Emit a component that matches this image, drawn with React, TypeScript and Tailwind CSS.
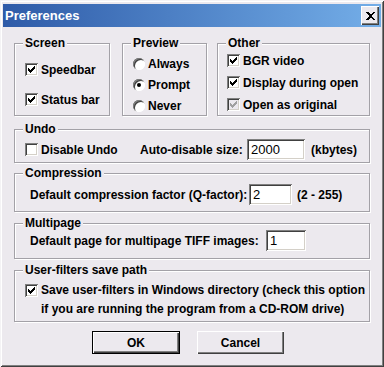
import type { ReactNode } from "react";

const font = { fontFamily: '"Liberation Sans", Arial, sans-serif' };

function Check({ checked, disabled }: { checked?: boolean; disabled?: boolean }) {
    return (
        <span
            className={`w-[13px] h-[13px] shrink-0 flex items-center justify-center shadow-[inset_1px_1px_0_#808080,inset_-1px_-1px_0_#ffffff,inset_2px_2px_0_#404040,inset_-2px_-2px_0_#d4d0c8] ${
                disabled ? "bg-[#ece9ee]" : "bg-white"
            }`}
        >
            {checked && (
                <svg width="7" height="7" viewBox="0 0 7 7" shapeRendering="crispEdges">
                    <path
                        d="M0 2h1v3h-1zM1 3h1v3h-1zM2 4h1v3h-1zM3 3h1v3h-1zM4 2h1v3h-1zM5 1h1v3h-1zM6 0h1v3h-1z"
                        fill={disabled ? "#a0a0a0" : "#000"}
                    />
                </svg>
            )}
        </span>
    );
}

function Radio({ checked }: { checked?: boolean }) {
    return (
        <span className="w-[12px] h-[12px] shrink-0 rounded-full bg-white flex items-center justify-center shadow-[inset_1px_1px_0_#808080,inset_-1px_-1px_0_#ffffff,inset_2px_2px_0_#404040]">
            {checked && <span className="w-[4px] h-[4px] rounded-full bg-black" />}
        </span>
    );
}

function Group({ title, className, children }: { title: string; className?: string; children?: ReactNode }) {
    return (
        <div className={`relative border border-[#a3a1a7] shadow-[1px_1px_0_#ffffff,inset_1px_1px_0_#ffffff] ${className ?? ""}`}>
            <span className="absolute -top-[8px] left-[8px] px-[2px] bg-[#ece9ee] leading-[14px]">{title}</span>
            {children}
        </div>
    );
}

function Field({ value, className }: { value: string; className?: string }) {
    return (
        <div
            className={`h-[21px] bg-white pl-[4px] flex items-center font-normal text-[13px] shadow-[inset_1px_1px_0_#808080,inset_-1px_-1px_0_#ffffff,inset_2px_2px_0_#404040,inset_-2px_-2px_0_#d4d0c8] ${className ?? ""}`}
        >
            {value}
        </div>
    );
}

function Option({ children, box }: { children: ReactNode; box: ReactNode }) {
    return (
        <div className="h-[15px] flex items-center gap-[3px]">
            {box}
            <span>{children}</span>
        </div>
    );
}

export default function App() {
    return (
        <div
            style={font}
            className="w-[384px] h-[367px] bg-[#ece9ee] text-black text-[12px] font-bold flex flex-col shadow-[inset_1px_1px_0_#f4f3f5,inset_-1px_-1px_0_#404040,inset_2px_2px_0_#ffffff,inset_-2px_-2px_0_#808080]"
        >
            {/* Title bar */}
            <div className="mt-[4px] mx-[3px] h-[23px] bg-gradient-to-r from-[#2f5ba8] to-[#74aee8] flex items-center pl-[2px] pr-[2px]">
                <span className="text-white text-[13px] leading-none">Preferences</span>
                <button className="ml-auto w-[18px] h-[19px] bg-[#ece9ee] flex items-center justify-center shadow-[inset_1px_1px_0_#ffffff,inset_-1px_-1px_0_#404040,inset_-2px_-2px_0_#808080]">
                    <svg width="9" height="8" viewBox="0 0 9 8" shapeRendering="crispEdges">
                        <path d="M0 0h2l2.5 2.5L7 0h2L5.5 4 9 8H7L4.5 5.5 2 8H0l3.5-4z" fill="#000" />
                    </svg>
                </button>
            </div>

            <div className="flex flex-col px-[14px]">
                {/* Top row */}
                <div className="mt-[16px] h-[73px] flex gap-[12px]">
                    <Group title="Screen" className="w-[96px] pl-[10px] pt-[18px] flex flex-col gap-[15px]">
                        <Option box={<Check checked />}>Speedbar</Option>
                        <Option box={<Check checked />}>Status bar</Option>
                    </Group>
                    <Group title="Preview" className="w-[85px] pl-[10px] pt-[12px] flex flex-col gap-[6px]">
                        <Option box={<Radio />}>Always</Option>
                        <Option box={<Radio checked />}>Prompt</Option>
                        <Option box={<Radio />}>Never</Option>
                    </Group>
                    <Group title="Other" className="ml-[-2px] flex-1 pl-[9px] pt-[9px] flex flex-col gap-[7px]">
                        <Option box={<Check checked />}>BGR video</Option>
                        <Option box={<Check checked />}>Display during open</Option>
                        <Option box={<Check checked disabled />}>Open as original</Option>
                    </Group>
                </div>

                {/* Undo */}
                <Group title="Undo" className="mt-[13px] h-[34px] pl-[10px] pt-[9px] flex items-start">
                    <div className="w-[115px] h-[21px] flex items-center gap-[3px]">
                        <Check />
                        <span>Disable Undo</span>
                    </div>
                    <div className="w-[107px] h-[21px] flex items-center">Auto-disable size:</div>
                    <Field value="2000" className="w-[58px]" />
                    <div className="ml-[6px] h-[21px] flex items-center">(kbytes)</div>
                </Group>

                {/* Compression */}
                <Group title="Compression" className="mt-[10px] h-[39px] pl-[15px] pt-[10px] flex items-start">
                    <div className="w-[219px] h-[21px] flex items-center">Default compression factor (Q-factor):</div>
                    <Field value="2" className="w-[43px]" />
                    <div className="ml-[5px] h-[21px] flex items-center">(2 - 255)</div>
                </Group>

                {/* Multipage */}
                <Group title="Multipage" className="mt-[11px] h-[36px] pl-[15px] pt-[6px] flex items-start">
                    <div className="w-[236px] h-[21px] flex items-center">Default page for multipage TIFF images:</div>
                    <Field value="1" className="w-[40px]" />
                </Group>

                {/* User-filters */}
                <Group title="User-filters save path" className="mt-[11px] h-[52px] pl-[10px] pt-[10px] flex items-start gap-[3px]">
                    <div className="h-[19px] flex items-center">
                        <Check checked />
                    </div>
                    <div className="leading-[19px]">
                        Save user-filters in Windows directory (check this option
                        <br />
                        if you are running the program from a CD-ROM drive)
                    </div>
                </Group>

                {/* Buttons */}
                <div className="mt-[9px] flex gap-[17px] pl-[78px]">
                    <button className="w-[88px] h-[23px] bg-[#ece9ee] border border-black shadow-[inset_1px_1px_0_#ffffff,inset_-1px_-1px_0_#404040,inset_-2px_-2px_0_#808080]">
                        OK
                    </button>
                    <button className="w-[87px] h-[23px] bg-[#ece9ee] shadow-[inset_1px_1px_0_#ffffff,inset_-1px_-1px_0_#404040,inset_-2px_-2px_0_#808080]">
                        Cancel
                    </button>
                </div>
            </div>
        </div>
    );
}
